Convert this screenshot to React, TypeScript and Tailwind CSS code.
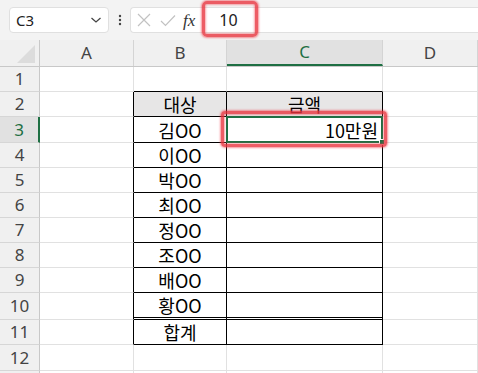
import React from 'react';

const COLS = ['A', 'B', 'C', 'D'];
const COL_W = ['w-[94px]', 'w-[93px]', 'w-[156px]', 'w-[95px]'];
const ROW_H: Record<number, string> = { 25: 'h-[25px]', 26: 'h-[26px]', 27: 'h-[27px]' };
const heights = [25, 25, 26, 25, 25, 25, 25, 25, 25, 27, 25, 26, 25];

const names = ['김OO', '이OO', '박OO', '최OO', '정OO', '조OO', '배OO', '황OO'];

const font = "font-['Noto_Sans_CJK_KR','Noto_Sans',sans-serif]";

function TopBar() {
  return (
    <div className="flex h-[40px] items-center bg-[#f3f3f3]">
      <div className="ml-[9px] flex h-[26px] w-[100px] items-center justify-between rounded-[4px] border border-[#e0e0e0] bg-white pl-[6px] pr-[6px]">
        <span className="text-[15px] text-[#222] font-['Noto_Sans',sans-serif]">C3</span>
        <svg width="12" height="8" viewBox="0 0 12 8" className="text-[#444]">
          <path d="M1.5 2 L6 6 L10.5 2" fill="none" stroke="currentColor" strokeWidth="1.3" />
        </svg>
      </div>
      <div className="flex w-[21px] justify-center">
        <svg width="4" height="12" viewBox="0 0 4 12">
          <circle cx="2" cy="2" r="1.2" fill="#444" />
          <circle cx="2" cy="6" r="1.2" fill="#444" />
          <circle cx="2" cy="10" r="1.2" fill="#444" />
        </svg>
      </div>
      <div className="flex h-[26px] flex-1 items-center rounded-l-[4px] border border-r-0 border-[#e0e0e0] bg-white">
        <svg width="14" height="14" viewBox="0 0 14 14" className="ml-[6px]">
          <path d="M1 1 L13 13 M13 1 L1 13" stroke="#c2c2c2" strokeWidth="1.2" fill="none" />
        </svg>
        <svg width="16" height="13" viewBox="0 0 16 13" className="ml-[9px]">
          <path d="M1 7 L5.5 11.5 L15 1.5" stroke="#c2c2c2" strokeWidth="1.2" fill="none" />
        </svg>
        <span className="ml-[7px] text-[17px] italic leading-none text-[#333] font-['Liberation_Serif',serif]">fx</span>
        <span className="ml-[24px] text-[16px] text-[#222] font-['Noto_Sans',sans-serif]">10</span>
      </div>
    </div>
  );
}

function Cell({ row, col }: { row: number; col: number }) {
  const inTable = row >= 2 && row <= 11;
  let right = 'border-r-[#e1e1e1]';
  let bottom = 'border-b border-b-[#e1e1e1]';
  if (col === 0 && inTable) right = 'border-r-black';
  if ((col === 1 || col === 2) && inTable) right = 'border-r-black';
  if ((col === 1 || col === 2) && row === 1) bottom = 'border-b border-b-black';
  if ((col === 1 || col === 2) && inTable) bottom = 'border-b border-b-black';
  if ((col === 1 || col === 2) && row === 10) bottom = 'border-b-[3px] border-double border-b-black';
  const fill = (col === 1 || col === 2) && row === 2 ? 'bg-[#e7e6e6]' : 'bg-white';

  let text: string | null = null;
  let align = 'justify-center';
  if (col === 1 && row === 2) text = '대상';
  if (col === 2 && row === 2) text = '금액';
  if (col === 1 && row >= 3 && row <= 10) text = names[row - 3];
  if (col === 1 && row === 11) text = '합계';
  if (col === 2 && row === 3) {
    text = '10만원';
    align = 'justify-end pr-[4px]';
  }

  return (
    <div className={`relative flex h-full items-end pb-[1px] border-r ${right} ${bottom} ${fill} ${COL_W[col]} ${align}`}>
      {text && <span className={`text-[18px] leading-[22px] text-black ${font}`}>{text}</span>}
      {col === 2 && row === 3 && (
        <>
          <div className="pointer-events-none absolute -left-[1px] -top-[1px] -right-[1px] -bottom-[1px] z-10 border-2 border-[#1e6f43]" />
          <div className="absolute -bottom-[3px] -right-[3px] z-10 h-[6px] w-[6px] border border-white bg-[#1e6f43]" />
          <div className="pointer-events-none absolute -left-[6px] -top-[6px] -right-[5px] -bottom-[5px] z-20 rounded-[4px] border-[3px] border-[#e8343f]/80 shadow-[0_0_2px_1px_rgba(240,60,70,0.55),inset_0_0_2px_1px_rgba(240,60,70,0.45)]" />
        </>
      )}
    </div>
  );
}

function Sheet() {
  return (
    <div className="flex flex-col">
      <div className="flex h-[27px] border-b border-[#c8c8c8] bg-[#f0f0f0]">
        <div className="relative w-[40px] border-r border-[#c8c8c8]">
          <svg width="20" height="20" viewBox="0 0 20 20" className="absolute left-[16px] top-[4px]">
            <polygon points="19,1 19,19 1,19" fill="#dcdcdc" />
          </svg>
        </div>
        {COLS.map((c, i) =>
          i === 2 ? (
            <div key={c} className={`flex items-center justify-center border-r border-b-2 border-r-[#d4d4d4] border-b-[#1e6f43] bg-[#e1e1e1] ${COL_W[i]} text-[17px] text-[#1e6f43] font-['Noto_Sans',sans-serif]`}>
              {c}
            </div>
          ) : (
            <div key={c} className={`flex items-center justify-center border-r border-[#d4d4d4] ${COL_W[i]} text-[17px] text-[#444] font-['Noto_Sans',sans-serif]`}>
              {c}
            </div>
          ),
        )}
      </div>
      {heights.map((h, idx) => {
        const row = idx + 1;
        const sel = row === 3;
        return (
          <div key={row} className={`flex shrink-0 ${ROW_H[h]}`}>
            <div
              className={`flex w-[40px] items-center justify-center border-b border-b-[#d6d6d6] text-[17px] font-['Noto_Sans',sans-serif] ${
                sel ? 'border-r-2 border-r-[#1e6f43] bg-[#e1e1e1] text-[#1e6f43]' : 'border-r border-r-[#c8c8c8] bg-[#f0f0f0] text-[#444]'
              }`}
            >
              {row <= 12 ? row : ''}
            </div>
            {COLS.map((c, i) => (
              <Cell key={c} row={row} col={i} />
            ))}
          </div>
        );
      })}
    </div>
  );
}

export default function App() {
  return (
    <div className="relative h-[373px] w-[478px] overflow-hidden bg-white">
      <TopBar />
      <Sheet />
      <div className="pointer-events-none absolute left-[202px] top-[1px] h-[36px] w-[56px] rounded-[5px] border-[3px] border-[#e8343f]/80 shadow-[0_0_2px_1px_rgba(240,60,70,0.55),inset_0_0_2px_1px_rgba(240,60,70,0.45)]" />
    </div>
  );
}
